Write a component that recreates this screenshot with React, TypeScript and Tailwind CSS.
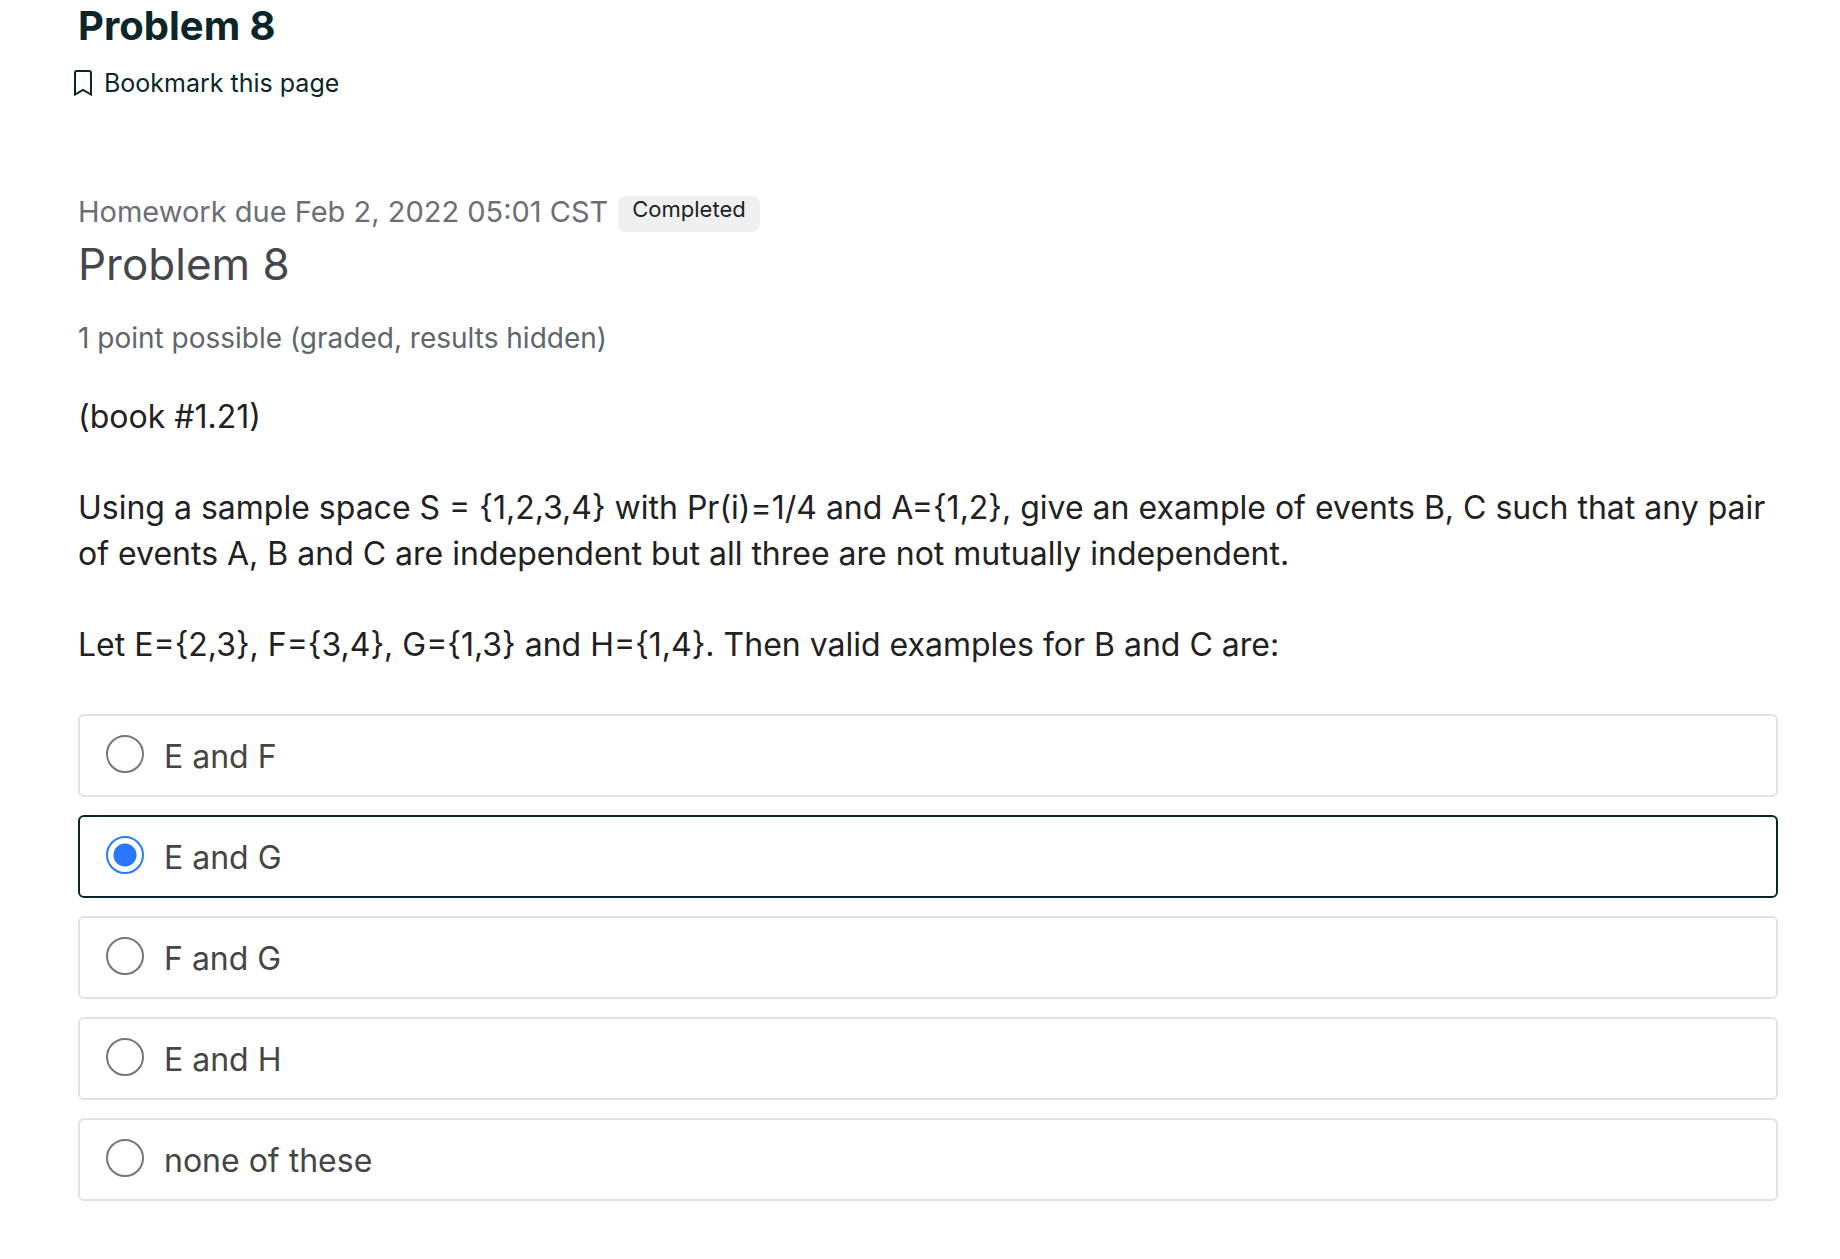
import { useState } from "react";

const options = ["E and F", "E and G", "F and G", "E and H", "none of these"];

export default function App() {
  const [selected, setSelected] = useState("E and G");

  return (
    <main className="min-h-screen bg-white pl-[78px] pr-[62px] pb-14 font-['Inter',sans-serif] text-[#212121]">
      <h1 className="pt-1 text-[40px] leading-[44px] font-bold text-[#0a262b]">Problem 8</h1>
      <button type="button" className="-ml-1 mt-5 flex items-center gap-3 text-[25px] leading-[30px] text-[#0a262b]">
        <svg viewBox="0 0 18 26" className="h-[26px] w-[18px]" fill="none" stroke="currentColor" strokeWidth="2">
          <path d="M1 24.500V3a2 2 0 0 1 2-2h12a2 2 0 0 1 2 2v21.500l-8-4.500z" />
        </svg>
        Bookmark this page
      </button>

      <div className="mt-[96px] flex items-start gap-2.5">
        <p className="text-[29px] leading-9 text-[#6c6e76]">Homework due Feb 2, 2022 05:01 CST</p>
        <span className="mt-0.5 h-9 rounded-lg bg-[#eff1f1] px-3.5 text-[22px] leading-[26px]">Completed</span>
      </div>
      <h2 className="mt-1.5 text-[44px] leading-[52px] text-[#45474d]">Problem 8</h2>
      <p className="mt-[30px] text-[28px] leading-9 text-[#5e656b]">1 point possible (graded, results hidden)</p>

      <div className="mt-[38px] space-y-[45px] text-[32px] leading-[46px]">
        <p>(book #1.21)</p>
        <p>
          {
            "Using a sample space S = {1,2,3,4} with Pr(i)=1/4 and A={1,2}, give an example of events B, C such that any pair of events A, B and C are independent but all three are not mutually independent."
          }
        </p>
        <p>{"Let E={2,3}, F={3,4}, G={1,3} and H={1,4}. Then valid examples for B and C are:"}</p>
      </div>

      <fieldset className="mt-[46px] space-y-[18px]">
        {options.map((option) => (
          <label
            key={option}
            className="flex items-start gap-5 rounded-md border-2 border-[#e2e2e2] px-[26px] pt-[19px] pb-4 text-[32px] leading-[44px] text-[#454545] has-checked:border-[#0a262b]"
          >
            <input
              type="radio"
              name="answer"
              checked={selected === option}
              onChange={() => setSelected(option)}
              className="size-[38px] shrink-0 appearance-none rounded-full border-2 border-[#767676] bg-white checked:border-[#2979ff] checked:bg-[radial-gradient(circle,#2979ff_11px,white_12px)]"
            />
            {option}
          </label>
        ))}
      </fieldset>
    </main>
  );
}
